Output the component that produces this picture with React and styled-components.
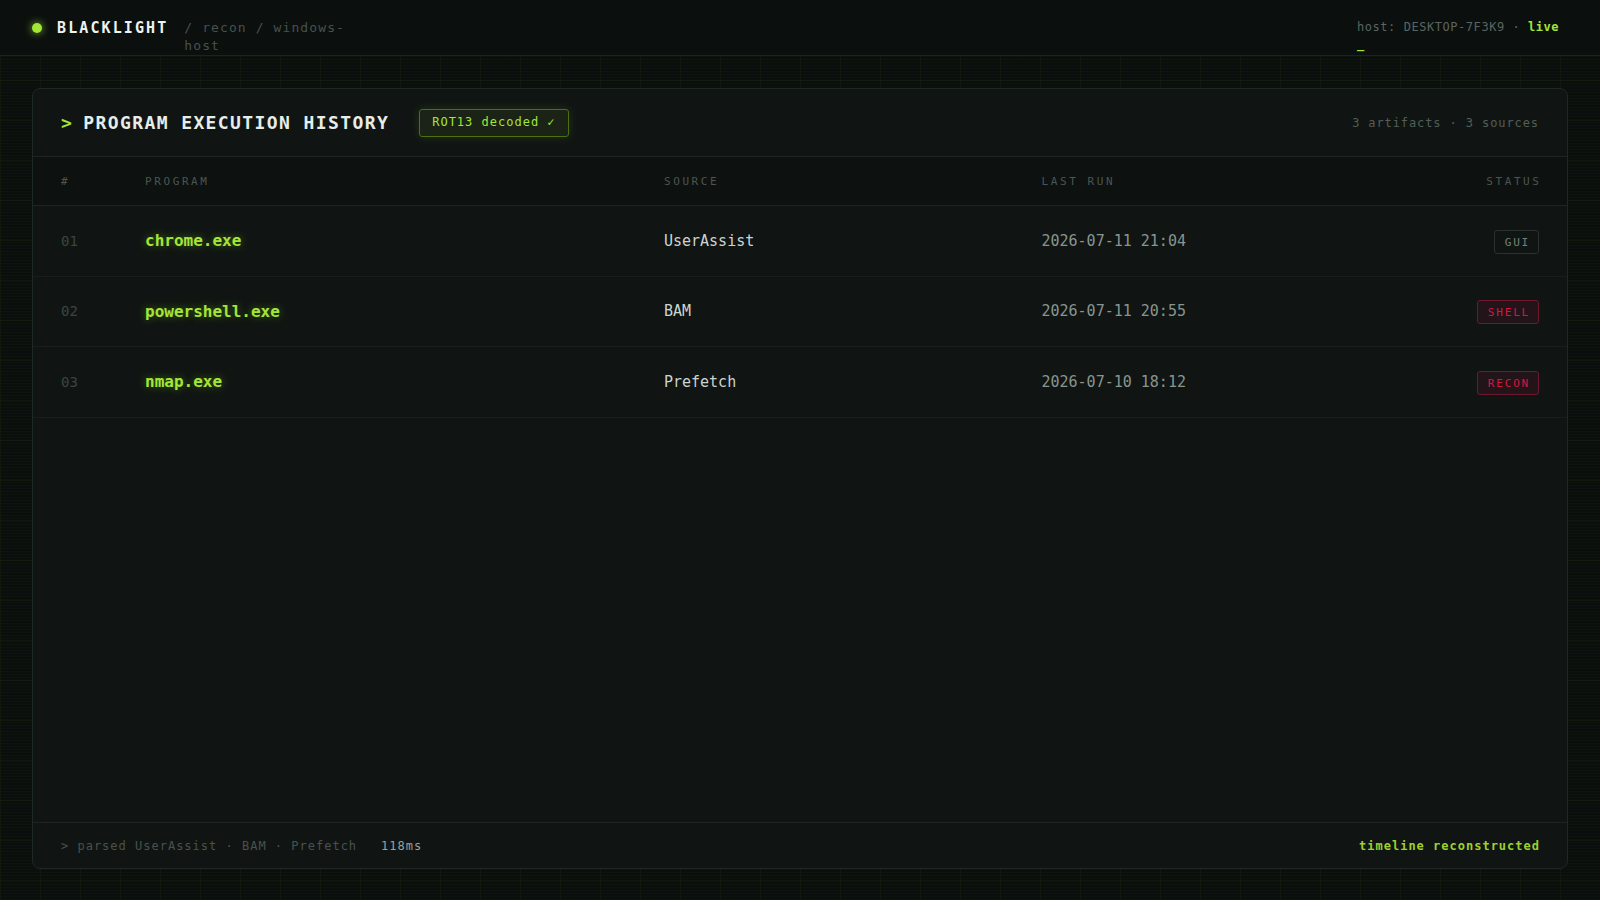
import React from 'react'
import styled, { createGlobalStyle } from 'styled-components'

const rows = [
  { id: '01', name: 'chrome.exe', source: 'UserAssist', time: '2026-07-11 21:04', status: 'GUI', tone: 'muted' },
  { id: '02', name: 'powershell.exe', source: 'BAM', time: '2026-07-11 20:55', status: 'SHELL', tone: 'alert' },
  { id: '03', name: 'nmap.exe', source: 'Prefetch', time: '2026-07-10 18:12', status: 'RECON', tone: 'alert' },
]

function App() {
  return (
    <>
      <GlobalStyle />
      <Page>
        <TopBar>
          <Brand>
            <Dot />
            <BrandName>BLACKLIGHT</BrandName>
            <Crumbs>/ recon / windows-host</Crumbs>
          </Brand>
          <HostInfo>
            host: DESKTOP-7F3K9 · <b>live</b> <Cursor>_</Cursor>
          </HostInfo>
        </TopBar>

        <Main>
          <Panel>
            <PanelHead>
              <Title><span>&gt;</span>PROGRAM EXECUTION HISTORY</Title>
              <DecodedTag>ROT13 decoded ✓</DecodedTag>
              <Counts>3 artifacts · 3 sources</Counts>
            </PanelHead>

            <HeadRow>
              <span>#</span>
              <span>PROGRAM</span>
              <span>SOURCE</span>
              <span>LAST RUN</span>
              <HeadEnd>STATUS</HeadEnd>
            </HeadRow>

            {rows.map((r) => (
              <Row key={r.id}>
                <Num>{r.id}</Num>
                <Program>{r.name}</Program>
                <Source>{r.source}</Source>
                <When>{r.time}</When>
                <Status tone={r.tone}>{r.status}</Status>
              </Row>
            ))}

            <Filler />

            <Footer>
              <FootLog>
                &gt; parsed UserAssist · BAM · Prefetch<Elapsed>118ms</Elapsed>
              </FootLog>
              <FootDone>timeline reconstructed</FootDone>
            </Footer>
          </Panel>
        </Main>
      </Page>
    </>
  )
}

const GlobalStyle = createGlobalStyle`
  * { box-sizing: border-box; }
  body {
    margin: 0;
    background: #0a0e0c;
    font-family: "DejaVu Sans Mono", "Liberation Mono", monospace;
    color: #c9d1cd;
  }
`

const Page = styled.div`
  height: 100vh;
  display: flex;
  flex-direction: column;
  background-color: #0a0e0c;
  background-image:
    repeating-linear-gradient(0deg, rgba(163, 230, 53, 0.025) 0 1px, transparent 1px 3px),
    linear-gradient(rgba(163, 230, 53, 0.04) 1px, transparent 1px),
    linear-gradient(90deg, rgba(163, 230, 53, 0.04) 1px, transparent 1px);
  background-size: auto, 40px 40px, 40px 40px;
`

const TopBar = styled.header`
  height: 56px;
  flex-shrink: 0;
  padding: 19px 32px 0;
  display: flex;
  justify-content: space-between;
  align-items: flex-start;
  background: #0b0f0e;
  border-bottom: 1px solid #1b2420;
`

const Brand = styled.div`
  display: flex;
  align-items: flex-start;
  gap: 15px;
`

const Dot = styled.span`
  width: 10px;
  height: 10px;
  margin-top: 4px;
  border-radius: 50%;
  background: #a3e635;
  box-shadow: 0 0 8px rgba(163, 230, 53, 0.8);
`

const BrandName = styled.span`
  font-size: 15px;
  line-height: 18px;
  font-weight: 700;
  letter-spacing: 2.1px;
  color: #eef2ef;
`

const Crumbs = styled.span`
  max-width: 170px;
  margin-left: 1px;
  font-size: 13px;
  line-height: 17.5px;
  letter-spacing: 1.1px;
  color: #47524d;
`

const HostInfo = styled.div`
  width: 211px;
  font-size: 12px;
  line-height: 17px;
  letter-spacing: 0.55px;
  color: #5a6560;
  b {
    color: #a3e635;
    font-weight: 700;
  }
`

const Cursor = styled.span`
  color: #a3e635;
  font-weight: 700;
`

const Main = styled.main`
  flex: 1;
  display: flex;
  padding: 32px 32px 31px;
  min-height: 0;
`

const Panel = styled.section`
  flex: 1;
  display: flex;
  flex-direction: column;
  background: #101513;
  border: 1px solid #1e2824;
  border-radius: 8px;
  overflow: hidden;
`

const PanelHead = styled.div`
  height: 68px;
  flex-shrink: 0;
  padding: 0 28px;
  display: flex;
  align-items: center;
  border-bottom: 1px solid #1c2522;
`

const Title = styled.h1`
  margin: 0;
  font-size: 18px;
  font-weight: 700;
  letter-spacing: 1.4px;
  color: #e7ede9;
  span {
    color: #a3e635;
    margin-right: 10px;
  }
`

const DecodedTag = styled.span`
  margin-left: 30px;
  padding: 5px 12px 6px;
  font-size: 12px;
  line-height: 15px;
  letter-spacing: 1px;
  color: #a3e635;
  background: rgba(163, 230, 53, 0.07);
  border: 1px solid #4a7012;
  border-radius: 3px;
  box-shadow: 0 0 10px rgba(163, 230, 53, 0.14);
`

const Counts = styled.span`
  margin-left: auto;
  font-size: 12px;
  letter-spacing: 0.9px;
  color: #535e59;
`

const grid = `
  display: grid;
  grid-template-columns: 60px 1.4fr 1fr 1fr 120px;
  column-gap: 24px;
  align-items: center;
  padding: 0 28px;
`

const HeadRow = styled.div`
  ${grid}
  height: 49px;
  flex-shrink: 0;
  background: #0d1110;
  border-bottom: 1px solid #1c2522;
  font-size: 11px;
  letter-spacing: 2.6px;
  color: #4b5651;
`

const HeadEnd = styled.span`
  justify-self: end;
  margin-right: -2.6px;
`

const Row = styled.div`
  ${grid}
  height: 70.5px;
  flex-shrink: 0;
  border-bottom: 1px solid #171e1b;
`

const Num = styled.span`
  font-size: 14px;
  color: #3a4541;
`

const Program = styled.span`
  font-size: 16px;
  font-weight: 700;
  color: #a3e635;
  text-shadow: 0 0 8px rgba(163, 230, 53, 0.4);
`

const Source = styled.span`
  font-size: 15px;
  color: #ccd4d0;
`

const When = styled.span`
  font-size: 15px;
  color: #89948f;
`

const Status = styled.span`
  justify-self: end;
  margin-top: 2px;
  padding: 5px 8px 4px 10px;
  font-size: 11px;
  line-height: 13px;
  letter-spacing: 1.8px;
  border-radius: 3px;
  border: 1px solid ${(p) => (p.tone === 'alert' ? '#6e1830' : '#29322f')};
  background: ${(p) => (p.tone === 'alert' ? '#23141a' : 'transparent')};
  color: ${(p) => (p.tone === 'alert' ? '#d4173f' : '#75807b')};
`

const Filler = styled.div`
  flex: 1;
`

const Footer = styled.footer`
  height: 46px;
  flex-shrink: 0;
  padding: 1px 28px 0;
  display: flex;
  align-items: center;
  justify-content: space-between;
  border-top: 1px solid #1c2522;
  font-size: 12px;
  letter-spacing: 1px;
`

const FootLog = styled.span`
  color: #48524e;
`

const Elapsed = styled.span`
  margin-left: 24px;
  color: #98a19d;
`

const FootDone = styled.span`
  font-weight: 700;
  color: #9ed12e;
  margin-right: -1px;
`

export default App
